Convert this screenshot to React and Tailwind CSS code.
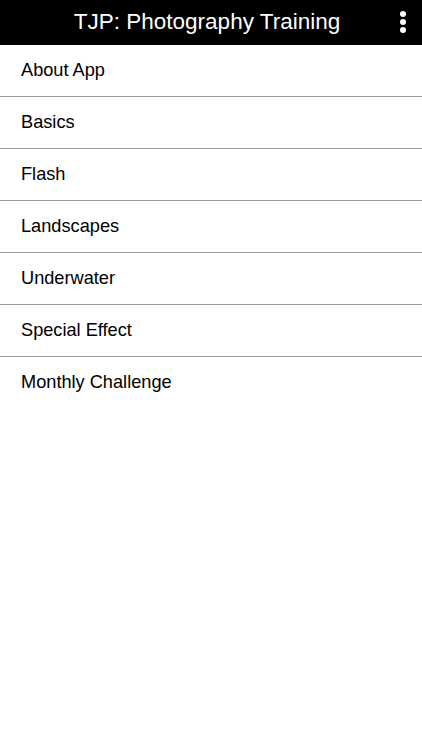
import React from 'react';

const items = [
  'About App',
  'Basics',
  'Flash',
  'Landscapes',
  'Underwater',
  'Special Effect',
  'Monthly Challenge',
];

export default function App() {
  return (
    <div className="min-h-[750px] bg-white font-['Liberation_Sans',Arial,sans-serif]">
      <header className="relative h-[45px] bg-black flex items-center justify-center">
        <h1 className="text-white text-[22.5px] leading-none ml-[-8px]">TJP: Photography Training</h1>
        <button className="absolute right-[16px] top-[11px] flex flex-col gap-[2px] items-center">
          <span className="w-[6px] h-[6px] rounded-full bg-white" />
          <span className="w-[6px] h-[6px] rounded-full bg-white" />
          <span className="w-[6px] h-[6px] rounded-full bg-white" />
        </button>
      </header>
      <ul>
        {items.map((item, i) => (
          <li
            key={item}
            className={
              'h-[52px] flex items-center pl-[21px] text-[18.2px] text-black ' +
              (i < items.length - 1 ? 'border-b border-[#9a9a9a]' : '')
            }
          >
            {item}
          </li>
        ))}
      </ul>
    </div>
  );
}
